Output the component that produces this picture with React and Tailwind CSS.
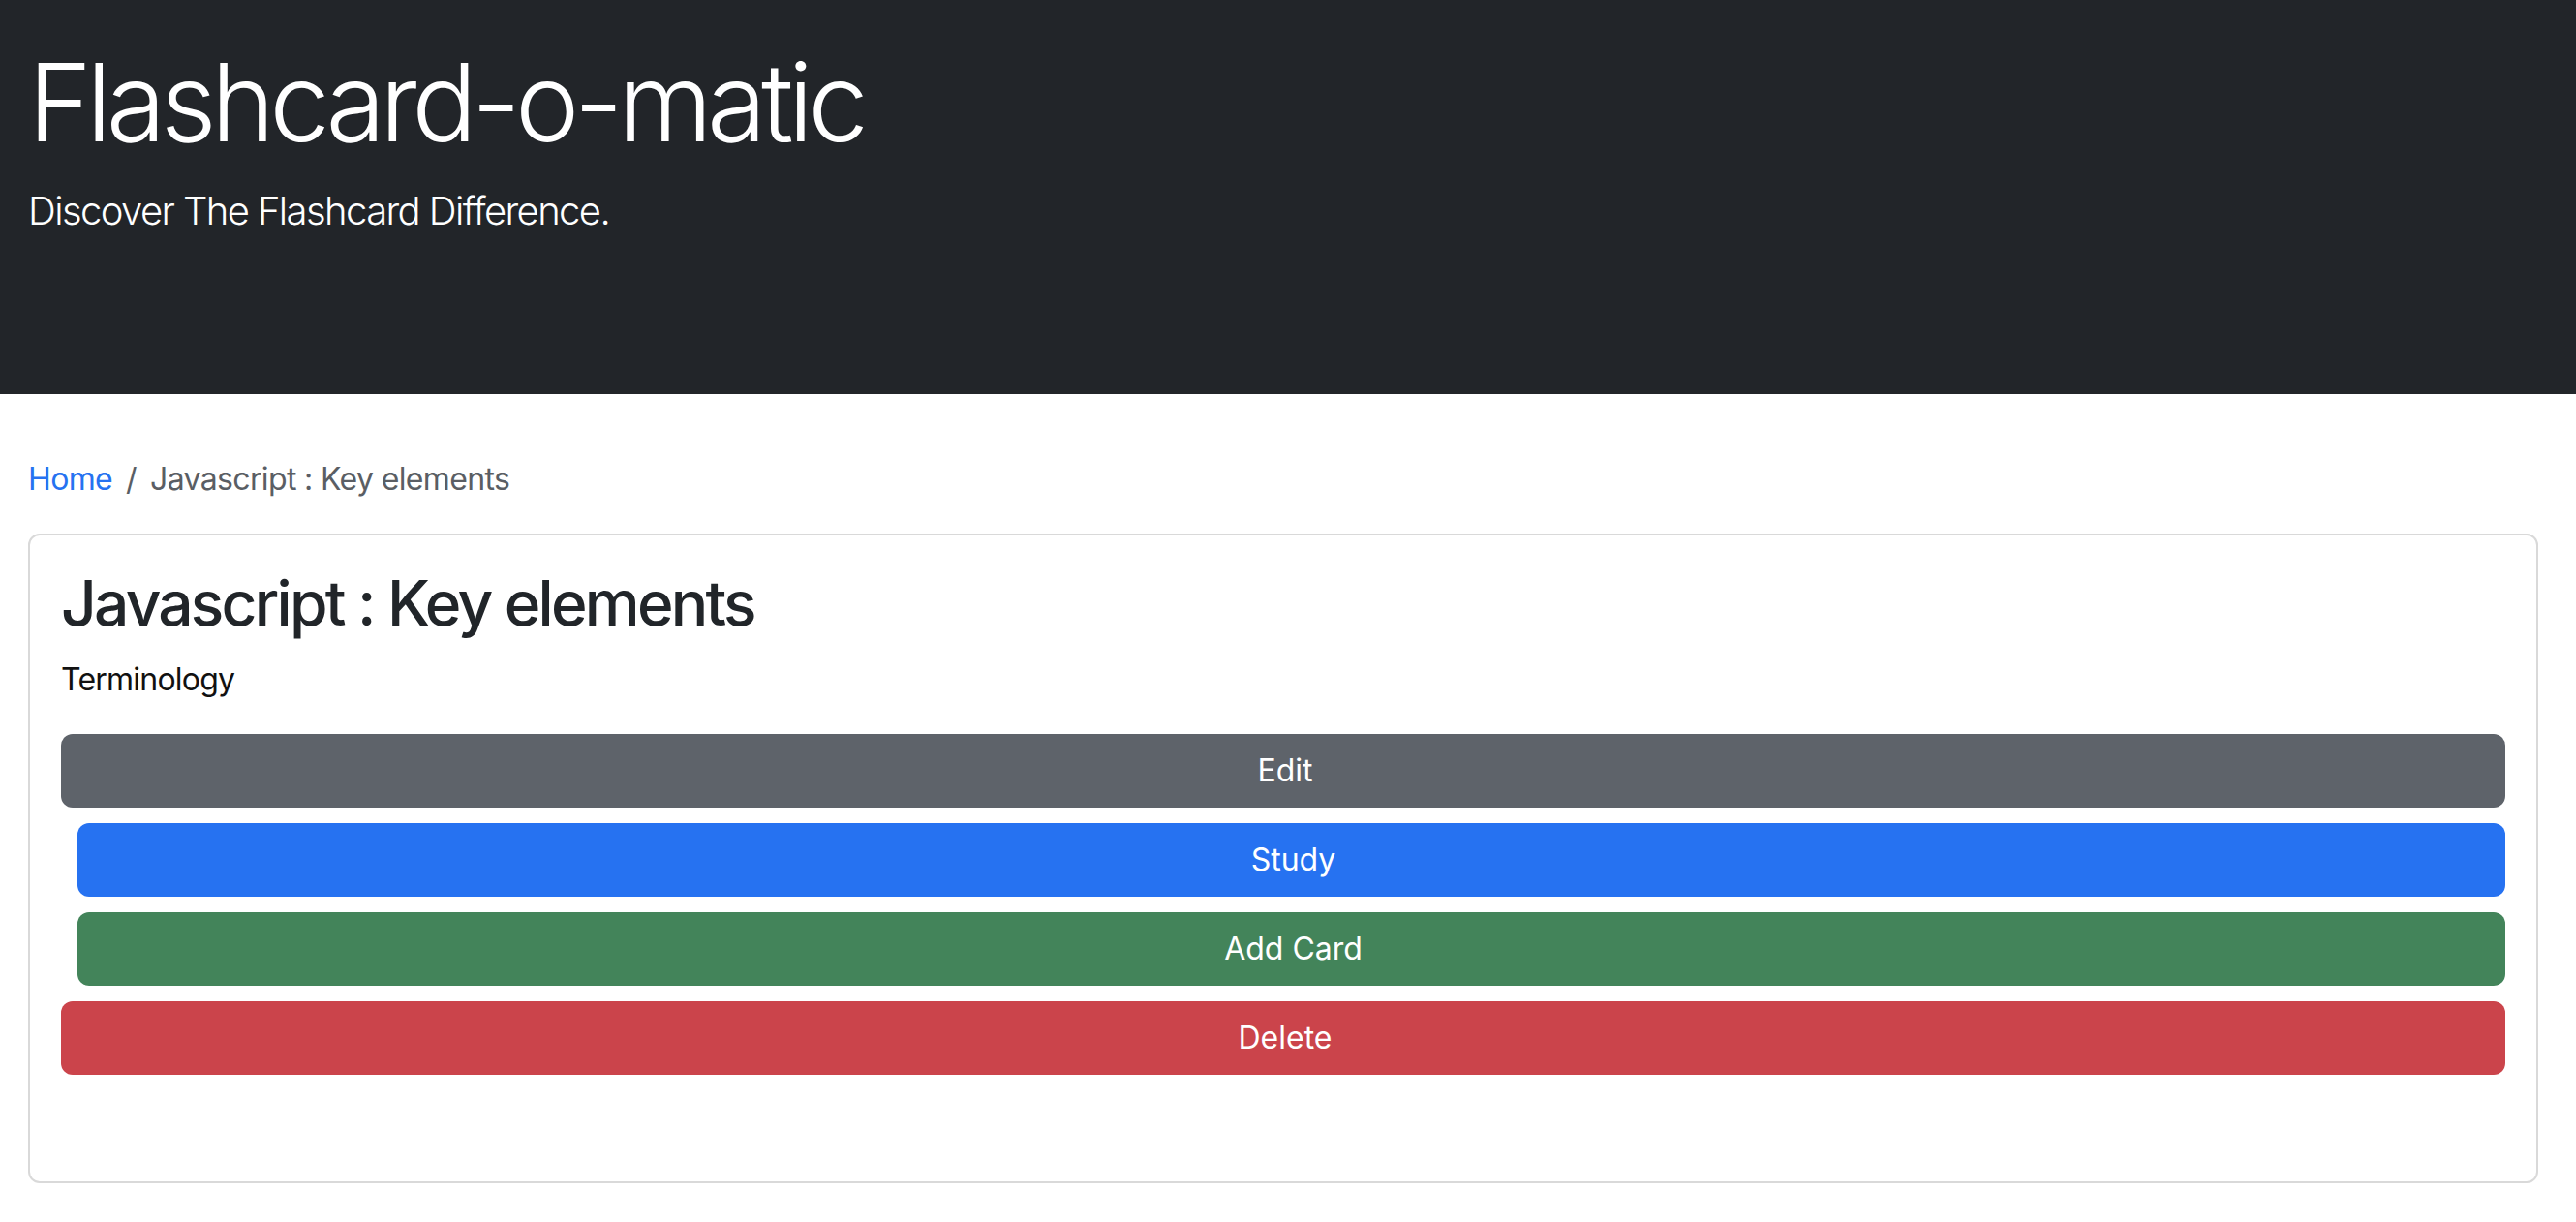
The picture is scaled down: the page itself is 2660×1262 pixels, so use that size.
import React from "react";

export default function App() {
  const font = { fontFamily: "Inter, 'Noto Sans', sans-serif" };
  return (
    <div className="min-h-screen bg-white" style={font}>
      <header className="bg-[#222529] h-[407px] px-[29px] pt-[38px]">
        <h1 className="text-white text-[112px] leading-[1.2] font-light tracking-[-0.05em] mb-[16px]">
          Flashcard-o-matic
        </h1>
        <p className="text-white text-[40px] leading-[1.5] font-light tracking-[-0.04em]">
          Discover The Flashcard Difference.
        </p>
      </header>
      <main className="pl-[29px] pr-[39px] pt-[64px]">
        <nav className="flex items-center text-[32px] leading-[1.5] mb-[32px] tracking-[-0.02em]">
          <a className="text-[#2672f1]" href="#">Home</a>
          <span className="text-[#5a5e64] px-[14px]">/</span>
          <span className="text-[#5a5e64]">Javascript : Key elements</span>
        </nav>
        <div className="border-2 border-[#d9d9d9] rounded-[12px] p-[32px] pb-[110px]">
          <h2 className="text-[64px] leading-[1.2] font-medium text-[#212529] mb-[16px] tracking-[-0.043em]">
            Javascript : Key elements
          </h2>
          <p className="text-[32px] leading-[1.5] text-[#111] mb-[32px] tracking-[-0.024em]">Terminology</p>
          <div className="flex flex-col gap-[16px] text-[32px]">
            <button className="h-[76px] w-full rounded-[12px] bg-[#5e636a] text-white pl-[4px]">Edit</button>
            <div className="pl-[17px]">
              <button className="h-[76px] w-full rounded-[12px] bg-[#2672f1] text-white pl-[4px]">Study</button>
            </div>
            <div className="pl-[17px]">
              <button className="h-[76px] w-full rounded-[12px] bg-[#43845a] text-white pl-[4px]">Add Card</button>
            </div>
            <button className="h-[76px] w-full rounded-[12px] bg-[#cb444b] text-white pl-[4px]">Delete</button>
          </div>
        </div>
      </main>
    </div>
  );
}
